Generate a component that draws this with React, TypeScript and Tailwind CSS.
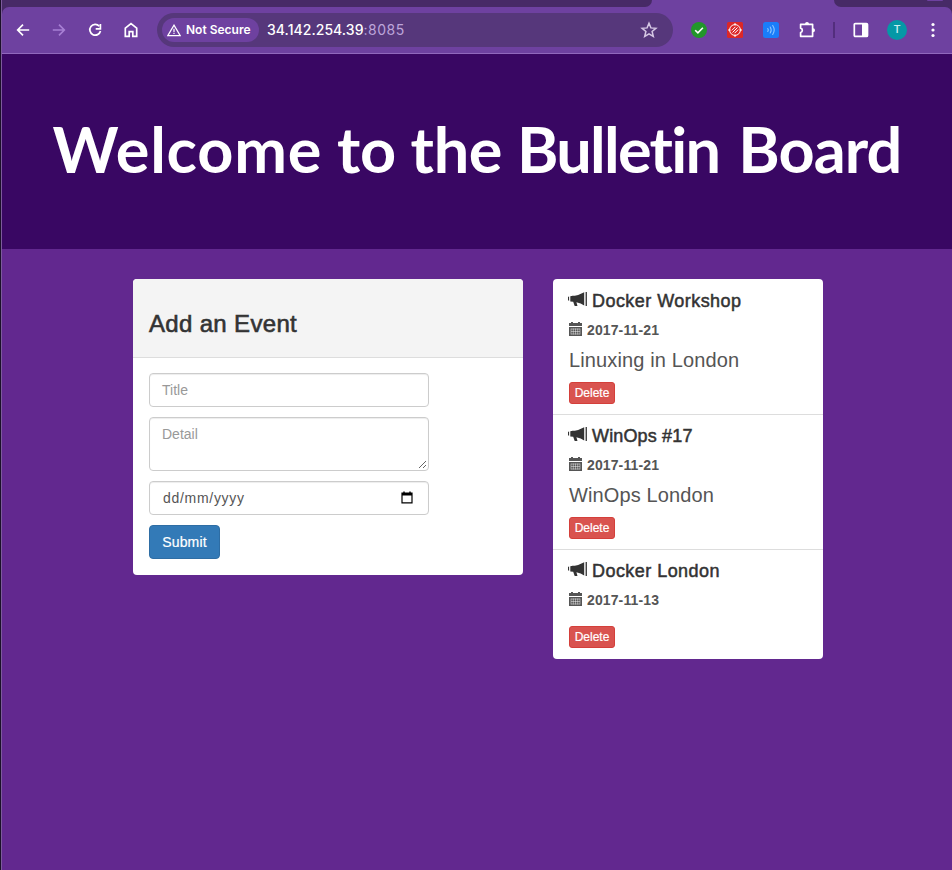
import type { ReactNode } from "react";

const events = [
  { title: "Docker Workshop", date: "2017-11-21", detail: "Linuxing in London", tracking: "tracking-[0.45px]" },
  { title: "WinOps #17", date: "2017-11-21", detail: "WinOps London", tracking: "tracking-[0.15px]" },
  { title: "Docker London", date: "2017-11-13", detail: "", tracking: "tracking-[0.45px]" },
];

function Icon({ children, className = "" }: { children: ReactNode; className?: string }) {
  return (
    <svg viewBox="0 0 20 20" className={`size-5 shrink-0 ${className}`} fill="none" stroke="currentColor" strokeWidth="1.7">
      {children}
    </svg>
  );
}

function Bullhorn() {
  return (
    <svg viewBox="0 0 20 17" className="-ml-px -mr-px h-[17px] w-5 shrink-0" fill="#333">
      <path d="M0 6.1q0-.6 1.1-.6v4.2Q0 9.7 0 9.1zM2.3 5.2 4.6 4.7H6.8Q11 4.1 16.2 1.3v13.2Q13 12 8.4 11.2l1 3.2q0 .6-.5.6H7.2q-.5 0-.7-.6L5.2 10.8l-2.9-.4zM17.6.9h1.3v14h-1.3z" />
    </svg>
  );
}

function CalendarIcon() {
  return (
    <svg viewBox="0 0 13 14" className="mb-0.5 h-[14px] w-[13px] shrink-0" fill="#555">
      <path d="M2 0h2v1h5V0h2v1h2v3H0V1h2zM0 5h13v9H0z" />
      <path d="M2 7h9M2 9.5h9M2 12h9M2 6.5v6M4.3 6.5v6M6.5 6.5v6M8.7 6.5v6M11 6.5v6" stroke="#fff" strokeWidth=".45" />
    </svg>
  );
}

function TabStrip() {
  return (
    <div className="flex h-[7px] shrink-0 justify-between bg-[#6e41a0]">
      <div className="h-[7px] w-[650px] rounded-br-[7px] bg-[#472a66]" />
      <div className="flex h-[7px] w-[118px] justify-end rounded-bl-[8px] bg-[#472a66]">
        <div className="mr-[9px] h-px w-4 rounded-b bg-[#6e41a0]" />
      </div>
    </div>
  );
}

function Toolbar() {
  return (
    <div className="h-[47px] shrink-0 bg-[#472a66]">
      <div className="flex h-[47px] items-center rounded-t-[7px] border-b border-[#9168bd] bg-[#6e41a0] pl-[11px] text-white">
        <Icon>
          <path d="M16.2 10H4.7M10 4.7 4.7 10l5.3 5.3" />
        </Icon>
        <Icon className="ml-4 text-[#a77fd4]">
          <path d="M3.8 10h11.5M10 4.7l5.3 5.3-5.3 5.3" />
        </Icon>
        <Icon className="ml-4">
          <path d="M14.3 6.2A5.4 5.4 0 1 0 15.5 11" />
          <path d="M15.4 4.1v4.7h-4.7" />
        </Icon>
        <Icon className="ml-4">
          <path d="M4.3 8.2 10 3.7l5.7 4.5v8.2h-3.9v-4.8H8.2v4.8H4.3z" />
        </Icon>
        <div className="ml-4 flex h-[34px] w-[516px] items-center rounded-full bg-[#56377b] pl-[5px] pr-[14px]">
          <div className="flex h-6 w-[97px] items-center rounded-full bg-[#6e41a0] pl-[5px]">
            <svg viewBox="0 0 15 14" className="h-[13px] w-[14px]" fill="none" stroke="#fff" strokeWidth="1.3">
              <path d="M7.5 1.2 14.2 12.5H.8z" />
              <path d="M7.5 5.2v3.4M7.5 9.5v1.4" />
            </svg>
            <span className="ml-[5px] whitespace-nowrap font-['Inter',sans-serif] text-xs font-semibold">Not Secure</span>
          </div>
          <span className="ml-2 whitespace-nowrap font-['Inter',sans-serif] text-sm font-medium tracking-[0.05px]">
            34.142.254.39<span className="font-normal tracking-[0.5px] text-[#bda5da]">:8085</span>
          </span>
          <Icon className="ml-auto text-[#d6c8e5]">
            <path strokeWidth="1.5" d="m10 3.3 1.9 4.6 5 .4-3.8 3.2 1.2 4.9-4.3-2.6-4.3 2.6 1.2-4.9-3.8-3.2 5-.4z" />
          </Icon>
        </div>
        <svg viewBox="0 0 16 16" className="ml-[18px] size-4 shrink-0">
          <circle cx="8" cy="8" r="8" fill="#22962a" />
          <path d="m4.2 8.2 2.7 2.7 5-5.1" fill="none" stroke="#fff" strokeWidth="1.6" />
        </svg>
        <svg viewBox="0 0 16 16" className="ml-5 size-4 shrink-0" fill="none" stroke="#fff" strokeWidth="1">
          <rect width="16" height="16" rx="1.5" fill="#dc2727" stroke="none" />
          <circle cx="8" cy="8" r="5.4" />
          <path d="M8 1v2.5M8 12.5V15M1 8h2.5M12.5 8H15M4.8 8.4l3.6-3.6M5.5 10.5l5-5M7.6 11.2l3.6-3.6" />
        </svg>
        <svg viewBox="0 0 16 16" className="ml-5 size-4 shrink-0" fill="none" stroke="#8fc7ff" strokeWidth="1.1" strokeLinecap="round">
          <rect width="16" height="16" rx="2.5" fill="#1a7dfa" stroke="none" />
          <path d="M4.8 6.5q1 1.5 0 3M7.2 5q2 3 0 6M9.7 3.5q3 4.5 0 9" />
        </svg>
        <Icon className="ml-[18px]">
          <path strokeLinejoin="round" d="M3.6 4.3h12v12h-12v-3.8a2.2 2.2 0 0 0 0-4.3z" />
          <path d="M8 4a2 2 0 0 1 4 0zM16 8.3a2 2 0 0 1 0 4z" fill="currentColor" stroke="none" />
        </Icon>
        <div className="ml-4 h-4 w-0.5 bg-[#532e7d]" />
        <svg viewBox="0 0 16 16" className="ml-[18px] size-4 shrink-0" fill="none" stroke="#fff" strokeWidth="1.7">
          <rect x="1.3" y="1.6" width="13.2" height="12.8" rx="1" />
          <path d="M9 2h5v12H9z" fill="#fff" stroke="none" />
        </svg>
        <div className="ml-[18px] flex size-5 shrink-0 items-center justify-center rounded-full bg-[#0598a6] font-['Roboto',sans-serif] text-[11px] font-medium text-[#cceeee]">
          T
        </div>
        <svg viewBox="0 0 4 16" className="ml-6 h-4 w-1 shrink-0" fill="#fff">
          <circle cx="2" cy="2.5" r="1.6" />
          <circle cx="2" cy="8" r="1.6" />
          <circle cx="2" cy="13.5" r="1.6" />
        </svg>
      </div>
    </div>
  );
}

function EventForm() {
  return (
    <section className="h-[296px] w-[390px] overflow-hidden rounded bg-white">
      <div className="h-[79px] border-b border-[#ddd] bg-[#f4f4f4] px-4 pt-[31px]">
        <h3 className="text-2xl leading-[27px] tracking-[0.33px] text-[#333] [-webkit-text-stroke:0.6px_#333]">Add an Event</h3>
      </div>
      <div className="flex flex-col items-start gap-2.5 px-4 pt-[15px] text-sm leading-5">
        <div className="h-[34px] w-[280px] rounded border border-[#ccc] px-3 py-1.5 text-[#999] shadow-[inset_0_1px_1px_rgba(0,0,0,0.075)]">
          Title
        </div>
        <div className="flex h-[54px] w-[280px] justify-between rounded border border-[#ccc] pl-3 pt-1.5 text-[#999] shadow-[inset_0_1px_1px_rgba(0,0,0,0.075)]">
          <span>Detail</span>
          <svg viewBox="0 0 9 9" className="mb-px mr-px size-[9px] self-end" stroke="#555" strokeWidth=".9">
            <path d="m1 8 7-7M5 8l3-3" />
          </svg>
        </div>
        <div className="flex h-[34px] w-[280px] items-center justify-between rounded border border-[#ccc] pl-[13px] pr-[15px] text-[#555] shadow-[inset_0_1px_1px_rgba(0,0,0,0.075)]">
          <span className="tracking-[0.7px]">dd/mm/yyyy</span>
          <svg viewBox="0 0 12 13" className="mb-0.5 h-[13px] w-3">
            <path d="M1 2.2h10v9.6H1z" fill="none" stroke="#000" strokeWidth="1.2" />
            <path d="M1 2h10v2.5H1zM2.3.4h1.4V2H2.3zM8.3.4h1.4V2H8.3z" />
          </svg>
        </div>
        <button className="h-[34px] w-[71px] rounded border border-[#2e6da4] bg-[#337ab7] tracking-[0.15px] text-white [-webkit-text-stroke:0.2px_#fff]">Submit</button>
      </div>
    </section>
  );
}

function EventList() {
  return (
    <section className="h-[380px] w-[270px] overflow-hidden rounded bg-white">
      {events.map((event) => (
        <article key={event.title} className="-mt-px border-b border-[#ddd] px-4 pb-2.5 pt-3 first:mt-0 last:border-b-0">
          <h4 className={`flex h-5 gap-[5px] whitespace-nowrap text-lg leading-[21px] text-[#333] [-webkit-text-stroke:0.5px_#333] ${event.tracking}`}>
            <Bullhorn />
            {event.title}
          </h4>
          <div className="mt-2 flex h-[22px] items-center gap-[5px] text-sm font-bold tracking-[0.12px] text-[#555]">
            <CalendarIcon />
            <span>{event.date}</span>
          </div>
          {event.detail ? (
            <p className="mt-1.5 h-[35px] text-xl leading-[26px] tracking-[0.13px] text-[#555]">{event.detail}</p>
          ) : (
            <div className="h-[15px]" />
          )}
          <button className="block h-[22px] w-[46px] rounded-[3px] border border-[#d43f3a] bg-[#d9534f] text-xs leading-[18px] text-white [-webkit-text-stroke:0.2px_#fff]">
            Delete
          </button>
        </article>
      ))}
    </section>
  );
}

export default function App() {
  return (
    <div className="h-[870px] w-[952px] overflow-hidden border-l border-[#1b1029] bg-[#62288f] font-['Liberation_Sans',sans-serif]">
      <div className="flex h-full flex-col border-l border-[#7c5a9c]">
        <TabStrip />
        <Toolbar />
        <header className="flex h-[195px] shrink-0 items-center justify-center bg-[#390763] pb-1.5">
          <h1 className="whitespace-nowrap font-['Lato',sans-serif] text-[63px] font-bold leading-none tracking-[-0.4px] text-white [font-variant-ligatures:none]">
            <span className="tracking-[0.8px]">Welcome</span> to{" "}
            <span className="tracking-[-0.4px]">the</span>{" "}
            <span className="mr-1 tracking-[-1.7px]">Bulletin</span>{" "}
            <span className="tracking-[-0.9px]">Board</span>
          </h1>
        </header>
        <main className="flex items-start gap-[30px] pl-[131px] pt-[30px]">
          <EventForm />
          <EventList />
        </main>
      </div>
    </div>
  );
}
